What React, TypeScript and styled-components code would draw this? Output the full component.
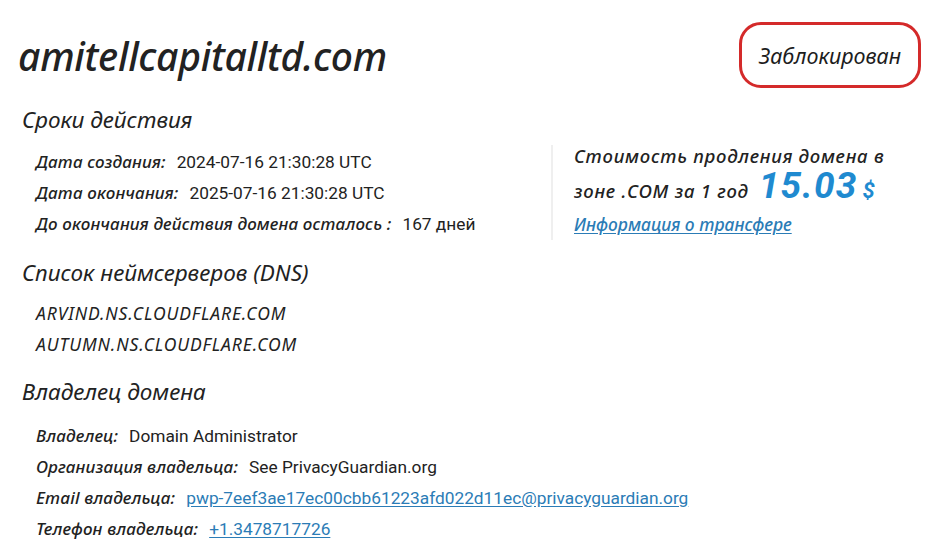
import styled, { createGlobalStyle } from "styled-components"

const GlobalStyle = createGlobalStyle`
  html, body {
    margin: 0;
    padding: 0;
    background: #ffffff;
  }
  body {
    font-family: "Noto Sans", "Liberation Sans", sans-serif;
    color: #222222;
  }
`

const Page = styled.div`
  width: 950px;
  height: 550px;
  box-sizing: border-box;
  padding: 22px 29px 0 18px;
  overflow: hidden;
`

const Header = styled.header`
  display: flex;
  align-items: center;
  justify-content: space-between;
  height: 66px;
`

const DomainName = styled.h1`
  margin: 0;
  font-size: 39px;
  font-weight: 500;
  font-style: italic;
  letter-spacing: -0.3px;
  color: #222;
`

const StatusBadge = styled.div<{ tone: string }>`
  display: flex;
  align-items: center;
  justify-content: center;
  box-sizing: border-box;
  width: 182px;
  height: 66px;
  border: 3px solid ${(p) => p.tone};
  border-radius: 22px;
  font-size: 21.5px;
  font-style: italic;
  color: #1d1d1d;
`

const Section = styled.section<{ top: number }>`
  margin-top: ${(p) => p.top}px;
  padding-left: 4px;
`

const SectionTitle = styled.h2`
  margin: 0;
  font-size: 22.5px;
  line-height: 30px;
  font-weight: 400;
  font-style: italic;
  color: #222;
`

const Columns = styled.div`
  display: flex;
  align-items: flex-start;
`

const FieldList = styled.div<{ gap: number }>`
  margin-top: ${(p) => p.gap}px;
  padding-left: 14px;
  width: 515px;
  flex-shrink: 0;
`

const FieldRow = styled.div`
  display: flex;
  align-items: baseline;
  height: 31px;
  line-height: 31px;
  white-space: nowrap;
`

const FieldLabel = styled.span`
  font-size: 17px;
  font-style: italic;
  font-weight: 500;
  letter-spacing: 0.15px;
  color: #222;
  margin-right: 11px;
`

const FieldValue = styled.span`
  font-family: Roboto, "Liberation Sans", sans-serif;
  font-size: 17.3px;
  color: #222;
`

const FieldLink = styled.a`
  font-family: Roboto, "Liberation Sans", sans-serif;
  font-size: 17.3px;
  color: #2b7cb6;
  text-decoration: underline;
  text-underline-offset: 2px;
`

const ServerName = styled.div`
  height: 31px;
  line-height: 31px;
  font-size: 17.5px;
  font-style: italic;
  color: #222;
  letter-spacing: 0.9px;
`

const PriceBox = styled.aside`
  margin-top: 10px;
  border-left: 2px solid #efefef;
  padding: 0 0 0 21px;
  height: 95px;
  display: flex;
  flex-direction: column;
`

const PriceText = styled.div<{ tall?: boolean }>`
  font-size: 18.5px;
  font-style: italic;
  font-weight: 500;
  letter-spacing: 0.75px;
  color: #222;
  line-height: ${(p) => (p.tall ? "48px" : "22px")};
  white-space: nowrap;
`

const Price = styled.span`
  display: inline-block;
  line-height: 30px;
  font-family: Roboto, "Liberation Sans", sans-serif;
  font-size: 37px;
  font-weight: 700;
  font-style: italic;
  color: #1f8ad0;
  letter-spacing: 1.2px;
  margin-left: 10px;
`

const Currency = styled.span`
  font-family: Roboto, "Liberation Sans", sans-serif;
  font-size: 22px;
  font-weight: 700;
  font-style: italic;
  color: #1f8ad0;
  margin-left: 5px;
`

const TransferLink = styled.a`
  font-size: 17.4px;
  font-style: italic;
  font-weight: 500;
  color: #2b7cb6;
  text-decoration: underline;
  text-underline-offset: 2px;
  line-height: 24px;
  margin-top: -3px;
  align-self: flex-start;
`

const dates = [
  { label: "Дата создания:", value: "2024-07-16 21:30:28 UTC" },
  { label: "Дата окончания:", value: "2025-07-16 21:30:28 UTC" },
  { label: "До окончания действия домена осталось :", value: "167 дней" },
]

const servers = ["ARVIND.NS.CLOUDFLARE.COM", "AUTUMN.NS.CLOUDFLARE.COM"]

const owner = [
  { label: "Владелец:", value: "Domain Administrator" },
  { label: "Организация владельца:", value: "See PrivacyGuardian.org" },
  {
    label: "Email владельца:",
    value: "pwp-7eef3ae17ec00cbb61223afd022d11ec@privacyguardian.org",
    href: "mailto:pwp-7eef3ae17ec00cbb61223afd022d11ec@privacyguardian.org",
  },
  { label: "Телефон владельца:", value: "+1.3478717726", href: "tel:+13478717726" },
]

export default function App() {
  return (
    <>
      <GlobalStyle />
      <Page>
        <Header>
          <DomainName>amitellcapitalltd.com</DomainName>
          <StatusBadge tone="#d42a2a">Заблокирован</StatusBadge>
        </Header>

        <Section top={17}>
          <SectionTitle>Сроки действия</SectionTitle>
          <Columns>
            <FieldList gap={11}>
              {dates.map((d) => (
                <FieldRow key={d.label}>
                  <FieldLabel>{d.label}</FieldLabel>
                  <FieldValue>{d.value}</FieldValue>
                </FieldRow>
              ))}
            </FieldList>
            <PriceBox>
              <PriceText>Стоимость продления домена в</PriceText>
              <PriceText tall>
                зоне .COM за 1 год
                <Price>15.03</Price>
                <Currency>$</Currency>
              </PriceText>
              <TransferLink href="#">Информация о трансфере</TransferLink>
            </PriceBox>
          </Columns>
        </Section>

        <Section top={18}>
          <SectionTitle>Список неймсерверов (DNS)</SectionTitle>
          <FieldList gap={10}>
            {servers.map((s) => (
              <ServerName key={s}>{s}</ServerName>
            ))}
          </FieldList>
        </Section>

        <Section top={17}>
          <SectionTitle>Владелец домена</SectionTitle>
          <FieldList gap={13}>
            {owner.map((o) => (
              <FieldRow key={o.label}>
                <FieldLabel>{o.label}</FieldLabel>
                {o.href ? <FieldLink href={o.href}>{o.value}</FieldLink> : <FieldValue>{o.value}</FieldValue>}
              </FieldRow>
            ))}
          </FieldList>
        </Section>
      </Page>
    </>
  )
}
